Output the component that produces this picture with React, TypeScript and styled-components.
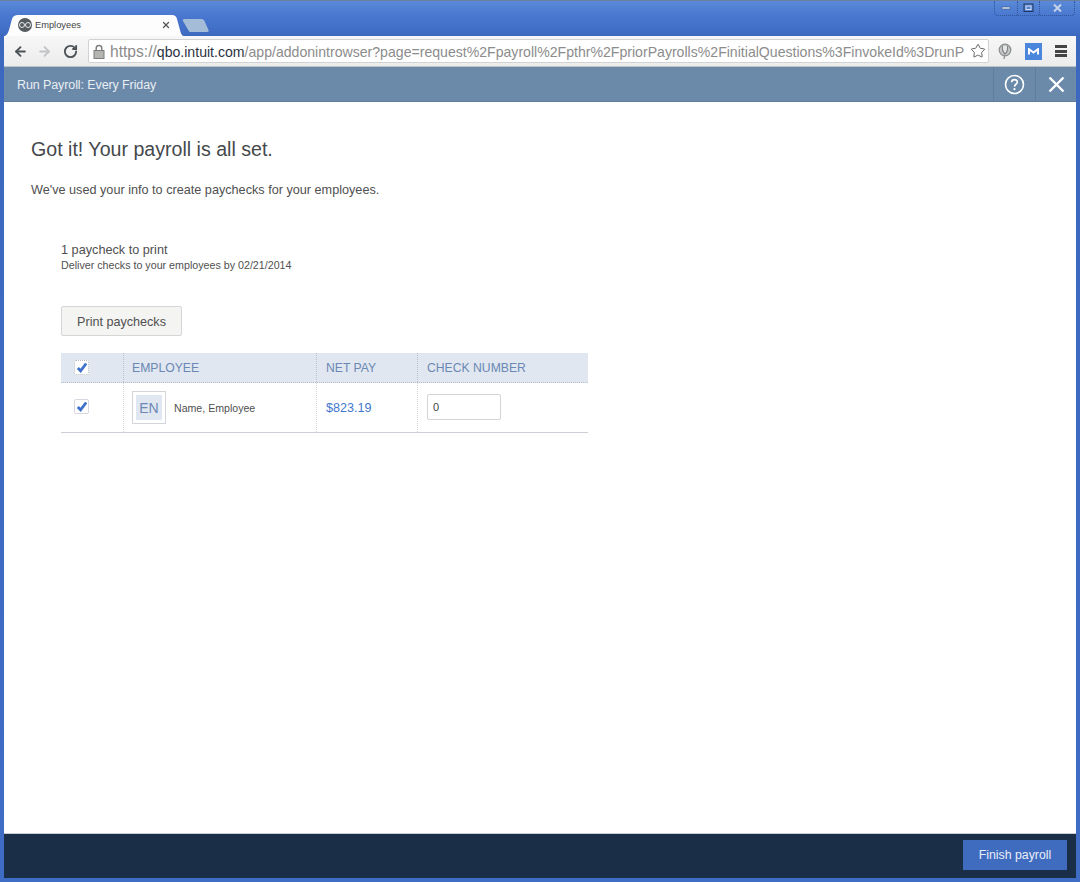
import React from "react";
import styled, { createGlobalStyle } from "styled-components";
import { ArrowLeft, ArrowRight, RotateCw, X, Star } from "lucide-react";

const Global = createGlobalStyle`
  html, body { margin: 0; padding: 0; height: 100%; overflow: hidden; background: #3f6cc4; }
  #root { height: 100%; }
  * { box-sizing: border-box; }
`;

const Frame = styled.div`
  width: 1080px;
  height: 882px;
  display: flex;
  flex-direction: column;
  padding: 0 4px 4px;
  background: linear-gradient(#5a8ad8 0, #4a78d0 14px, #3c68c0 36px, #3f6cc4 100%);
  border-top: 1px solid #6b7f9e;
  font-family: "Liberation Sans", Arial, sans-serif;
  position: relative;
`;

const WindowButtons = styled.div`
  position: absolute;
  top: 0;
  right: 5px;
  width: 81px;
  height: 15px;
  display: grid;
  grid-template-columns: 23px 22px 1fr;
  border: 1px dotted #2f5396;
  border-top: 0;
  border-radius: 0 0 4px 4px;
`;

const WinButton = styled.div<{ $divider?: boolean }>`
  display: flex;
  align-items: center;
  justify-content: center;
  border-right: ${(p) => (p.$divider ? "1px dotted #2f5396" : "0")};
`;

const TabStrip = styled.div`
  height: 35px;
  display: flex;
  align-items: flex-end;
  padding-left: 1px;
`;

const Tab = styled.div`
  position: relative;
  width: 179px;
  height: 21px;
  display: flex;
  align-items: center;
  padding: 0 0 1px 13px;
`;

const TabShape = styled.svg`
  position: absolute;
  inset: 0;
  width: 100%;
  height: 100%;
`;

const Favicon = styled.div`
  position: relative;
  width: 14px;
  height: 14px;
  border-radius: 50%;
  background: #555b5e;
  display: flex;
  align-items: center;
  justify-content: center;
  margin-right: 3px;
`;

const FavRing = styled.span`
  width: 6px;
  height: 6px;
  border-radius: 50%;
  border: 1px solid #e8e8e8;
`;

const TabTitle = styled.span`
  position: relative;
  font-size: 9.3px;
  color: #444;
  flex: 1;
`;

const TabClose = styled.span`
  position: relative;
  display: flex;
  margin-right: 13px;
  color: #555;
`;

const NewTab = styled.svg`
  width: 27px;
  height: 13px;
  margin: 0 0 4px -2px;
`;

const Toolbar = styled.div`
  height: 31px;
  display: flex;
  align-items: center;
  padding: 0 7px 0 9px;
  background: linear-gradient(#f7f7f7, #ececec);
  border-bottom: 1px solid #bfc3c7;
`;

const NavIcon = styled.span<{ $color: string; $w: number }>`
  display: flex;
  width: ${(p) => p.$w}px;
  color: ${(p) => p.$color};
`;

const Omnibox = styled.div`
  width: 901px;
  height: 24px;
  margin-left: 4px;
  background: #fff;
  border: 1px solid #d0d2d4;
  border-radius: 2px;
  display: flex;
  align-items: center;
  padding: 0 2px 0 4px;
`;

const LockIcon = styled.svg`
  flex: none;
  width: 12px;
  height: 15px;
`;

const Url = styled.div`
  flex: 1;
  min-width: 0;
  overflow: hidden;
  white-space: nowrap;
  font-size: 14.1px;
  line-height: 18px;
  color: #8c8c8c;
  margin: 1px 2px 0 5px;
`;

const Scheme = styled.span`
  font-size: 15.6px;
`;

const Host = styled.span`
  color: #2a3442;
`;

const ToolbarIcons = styled.div`
  flex: 1;
  display: flex;
  align-items: center;
  padding-left: 9px;
`;

const Ext = styled.div`
  width: 17px;
  height: 17px;
  margin-left: 13px;
  background: #4a86dc;
  display: flex;
  align-items: center;
  justify-content: center;
`;

const Burger = styled.div`
  width: 12px;
  height: 12px;
  margin-left: 13px;
  display: flex;
  flex-direction: column;
  justify-content: space-between;
`;

const BurgerLine = styled.span`
  height: 3px;
  background: #444;
`;

const AppBar = styled.div`
  height: 35px;
  display: flex;
  align-items: stretch;
  background: #6b89a9;
  color: #fff;
  border-bottom: 1px solid #5f7d9c;
`;

const AppTitle = styled.div`
  flex: 1;
  display: flex;
  align-items: center;
  padding: 1px 0 0 13px;
  font-size: 12.5px;
  color: #e9eef3;
  letter-spacing: -0.1px;
`;

const BarAction = styled.div<{ $w: number }>`
  width: ${(p) => p.$w}px;
  display: flex;
  align-items: center;
  justify-content: center;
  border-left: 1px solid #5f7d9c;
`;

const Content = styled.main`
  flex: 1;
  min-height: 0;
  background: #fff;
  padding: 35px 0 0 27px;
  color: #505050;
`;

const Heading = styled.h1`
  margin: 0;
  font-size: 19.6px;
  line-height: 24px;
  font-weight: 400;
  color: #45494c;
`;

const Lead = styled.p`
  margin: 20px 0 0;
  font-size: 12.66px;
  line-height: 18px;
`;

const Section = styled.section`
  margin: 43px 0 0 30px;
`;

const CountLine = styled.div`
  font-size: 12.7px;
  line-height: 15px;
  padding-top: 1px;
`;

const DeliverLine = styled.div`
  font-size: 10.7px;
  line-height: 15px;
`;

const PrintButton = styled.button`
  display: block;
  margin-top: 33px;
  width: 121px;
  height: 30px;
  padding: 1px 0 0;
  border: 1px solid #d3d5d7;
  border-radius: 2px;
  background: #f4f4f2;
  font: 12.6px "Liberation Sans", Arial, sans-serif;
  color: #505050;
`;

const Table = styled.div`
  width: 527px;
  margin-top: 17px;
  border-bottom: 1px solid #ccd0d6;
`;

const Columns = `
  display: grid;
  grid-template-columns: 63px 193px 101px 170px;
`;

const HeadRow = styled.div`
  ${Columns}
  height: 30px;
  background: #e0e7f0;
  border-bottom: 1px dotted #b4bdc9;
`;

const BodyRow = styled.div`
  ${Columns}
  height: 49px;
`;

const HeadCell = styled.div<{ $pad: number }>`
  display: flex;
  align-items: center;
  padding-left: ${(p) => p.$pad}px;
  border-right: 1px dotted #b9c2ce;
  font-size: 12.2px;
  color: #6b87b4;
  &:last-child { border-right: 0; }
`;

const BodyCell = styled.div<{ $pad: number; $lift?: number }>`
  display: flex;
  align-items: center;
  padding-left: ${(p) => p.$pad}px;
  padding-bottom: ${(p) => p.$lift ?? 0}px;
  border-right: 1px dotted #d3d8df;
  &:last-child { border-right: 0; }
`;

const CheckBox = styled.div<{ $dotted?: boolean }>`
  width: 15px;
  height: 15px;
  background: #fff;
  border: 1px ${(p) => (p.$dotted ? "dotted #b4b9c0" : "solid #d5d9df")};
  border-radius: 2px;
  display: flex;
  align-items: center;
  justify-content: center;
`;

const Avatar = styled.div`
  width: 34px;
  height: 33px;
  border: 1px solid #d2d5d9;
  padding: 3px;
  margin-right: 8px;
  flex: none;
`;

const AvatarInner = styled.div`
  width: 100%;
  height: 100%;
  background: #e0e7f0;
  display: flex;
  align-items: center;
  justify-content: center;
  font-size: 14px;
  color: #6b87b4;
`;

const EmployeeName = styled.span`
  font-size: 10.6px;
  color: #505050;
  margin-top: 1px;
`;

const Amount = styled.span`
  font-size: 12.6px;
  color: #4377cc;
`;

const CheckInput = styled.input`
  width: 74px;
  height: 26px;
  margin-top: -1px;
  padding: 0 5px;
  border: 1px solid #d2d5d9;
  border-radius: 2px;
  font: 11px "Liberation Sans", Arial, sans-serif;
  color: #444;
`;

const Footer = styled.footer`
  height: 44px;
  background: #1a2e47;
  display: flex;
  align-items: center;
  justify-content: flex-end;
  padding: 0 9px 2px 0;
  box-shadow: 0 -1px 0 #c7ccd2;
`;

const FinishButton = styled.button`
  width: 104px;
  height: 30px;
  padding: 0;
  border: 0;
  background: #406cc0;
  color: #e9eef8;
  font: 12.3px "Liberation Sans", Arial, sans-serif;
`;

const Tick = () => (
  <svg width="12" height="11" viewBox="0 0 12 11" fill="none">
    <path d="M1.8 6 L4.6 8.8 L10.2 1.5" stroke="#3f70cc" strokeWidth="2.8" />
  </svg>
);

export default function App() {
  return (
    <>
      <Global />
      <Frame>
        <WindowButtons>
          <WinButton $divider>
            <svg width="10" height="4"><rect x="1" y="1" width="8" height="2" fill="#e8eef8" stroke="#39557f" strokeWidth="0.6" /></svg>
          </WinButton>
          <WinButton $divider>
            <svg width="11" height="10"><rect x="1" y="1" width="9" height="7.5" fill="none" stroke="#22375c" strokeWidth="1" /><rect x="3" y="3" width="5" height="3.5" fill="none" stroke="#d6e0f2" strokeWidth="1" /></svg>
          </WinButton>
          <WinButton>
            <svg width="11" height="10"><path d="M2 1.5 L9 8.5 M9 1.5 L2 8.5" stroke="#c4d2ea" strokeWidth="2" /></svg>
          </WinButton>
        </WindowButtons>
        <TabStrip>
          <Tab>
            <TabShape viewBox="0 0 179 21" preserveAspectRatio="none">
              <path d="M0 21 C2 20 3 18 4 15 L7 4 C8 1 10 0 13 0 L167 0 C170 0 171 1 172 4 L175 15 C176 19 177 21 179 21 Z" fill="#fdfdfd" />
            </TabShape>
            <Favicon><FavRing /><FavRing /></Favicon>
            <TabTitle>Employees</TabTitle>
            <TabClose><X size={10} strokeWidth={3} /></TabClose>
          </Tab>
          <NewTab viewBox="0 0 27 13">
            <path d="M2 0 L20 0 C21 0 22 1 22.5 2 L26.5 11 C27 12 26.5 13 25 13 L9 13 C7.5 13 7 12.5 6.5 11.5 L1 2 C0.5 1 1 0 2 0 Z" fill="#a4bcd8" />
          </NewTab>
        </TabStrip>
        <Toolbar>
          <NavIcon $color="#4c5256" $w={24}><ArrowLeft size={15} strokeWidth={3} /></NavIcon>
          <NavIcon $color="#c2c4c6" $w={26}><ArrowRight size={15} strokeWidth={3} /></NavIcon>
          <NavIcon $color="#4c5256" $w={21}><RotateCw size={15} strokeWidth={3} /></NavIcon>
          <Omnibox>
            <LockIcon viewBox="0 0 12 15">
              <path d="M3.2 7 V4.2 C3.2 0.6 8.8 0.6 8.8 4.2 V7" fill="none" stroke="#808080" strokeWidth="1.5" />
              <rect x="1" y="6.5" width="10" height="8" fill="#b4b4b0" stroke="#7d7d7d" />
            </LockIcon>
            <Url>
              <Scheme>https://</Scheme><Host>qbo.intuit.com</Host>/app/addonintrowser?page=request%2Fpayroll%2Fpthr%2FpriorPayrolls%2FinitialQuestions%3FinvokeId%3DrunP
            </Url>
            <Star size={16} color="#666" strokeWidth={1.5} />
          </Omnibox>
          <ToolbarIcons>
            <svg width="14" height="17" viewBox="0 0 14 17">
              <circle cx="7" cy="7" r="5.8" fill="#c4c6c6" stroke="#8a8d8e" strokeWidth="1.2" />
              <path d="M4.5 3 C4 6 5 9 7 11 C9 9 10 6 9.5 3" stroke="#808384" strokeWidth="1.1" fill="#e6e6e6" />
              <path d="M6.5 12.5 L6 16" stroke="#85888a" strokeWidth="1.2" fill="none" />
            </svg>
            <Ext>
              <svg width="11" height="7" viewBox="0 0 11 7"><path d="M1 6.5 V1.2 L5.5 4.5 L10 1.2 V6.5" stroke="#fff" strokeWidth="2" fill="none" /></svg>
            </Ext>
            <Burger><BurgerLine /><BurgerLine /><BurgerLine /></Burger>
          </ToolbarIcons>
        </Toolbar>
        <AppBar>
          <AppTitle>Run Payroll: Every Friday</AppTitle>
          <BarAction $w={42}>
            <svg width="21" height="21" viewBox="0 0 21 21" fill="none" stroke="#fff">
              <circle cx="10.5" cy="10.5" r="9" strokeWidth="1.6" />
              <path d="M7.6 8.2 C7.8 4.6 13.4 4.8 13.3 8.2 C13.2 10.2 10.6 10.2 10.5 12.6" strokeWidth="1.7" />
              <circle cx="10.5" cy="15.2" r="1.1" fill="#fff" stroke="none" />
            </svg>
          </BarAction>
          <BarAction $w={41}>
            <svg width="17" height="17" viewBox="0 0 17 17"><path d="M1.5 1.5 L15.5 15.5 M15.5 1.5 L1.5 15.5" stroke="#fff" strokeWidth="2.4" /></svg>
          </BarAction>
        </AppBar>
        <Content>
          <Heading>Got it! Your payroll is all set.</Heading>
          <Lead>We've used your info to create paychecks for your employees.</Lead>
          <Section>
            <CountLine>1 paycheck to print</CountLine>
            <DeliverLine>Deliver checks to your employees by 02/21/2014</DeliverLine>
            <PrintButton>Print paychecks</PrintButton>
            <Table>
              <HeadRow>
                <HeadCell $pad={13}><CheckBox $dotted><Tick /></CheckBox></HeadCell>
                <HeadCell $pad={8}>EMPLOYEE</HeadCell>
                <HeadCell $pad={9}>NET PAY</HeadCell>
                <HeadCell $pad={9}>CHECK NUMBER</HeadCell>
              </HeadRow>
              <BodyRow>
                <BodyCell $pad={13} $lift={2}><CheckBox><Tick /></CheckBox></BodyCell>
                <BodyCell $pad={8}>
                  <Avatar><AvatarInner>EN</AvatarInner></Avatar>
                  <EmployeeName>Name, Employee</EmployeeName>
                </BodyCell>
                <BodyCell $pad={9}><Amount>$823.19</Amount></BodyCell>
                <BodyCell $pad={9}><CheckInput defaultValue="0" /></BodyCell>
              </BodyRow>
            </Table>
          </Section>
        </Content>
        <Footer>
          <FinishButton>Finish payroll</FinishButton>
        </Footer>
      </Frame>
    </>
  );
}
